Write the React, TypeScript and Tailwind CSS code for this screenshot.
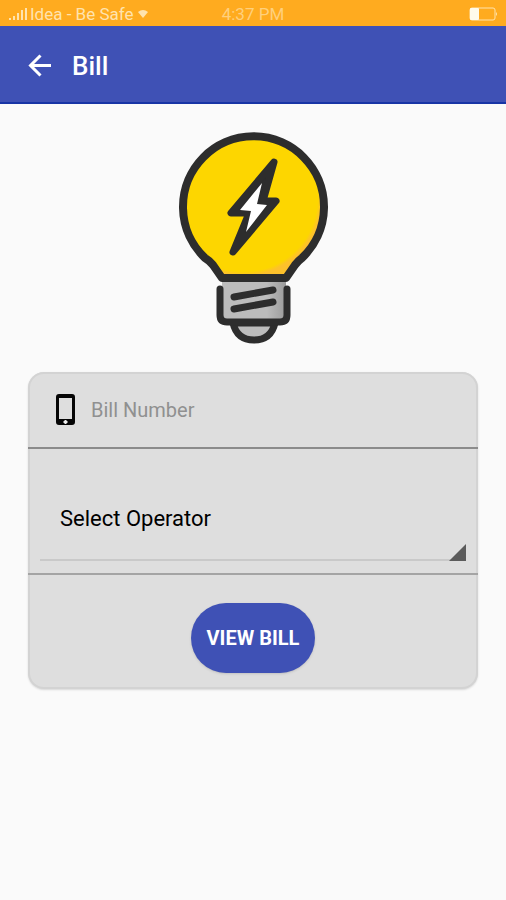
import { useState } from 'react';

function StatusBar() {
  return (
    <div className="grid h-[26px] grid-cols-3 items-center bg-[#ffab1f] px-2 pt-[2px] text-[17px] leading-6 text-[#ffe3ae]">
      <div className="flex items-center whitespace-nowrap">
        <svg width="22" height="14" viewBox="0 0 22 14" fill="#ffe3ae" aria-hidden="true">
          <rect x="1" y="11" width="2" height="2" />
          <rect x="5" y="9" width="2" height="4" />
          <rect x="9" y="6" width="2" height="7" />
          <rect x="13" y="3" width="2" height="10" />
          <rect x="17" y="1" width="2" height="12" />
        </svg>
        <span>Idea - Be Safe</span>
        <svg className="ml-1" width="10" height="8" viewBox="0 0 10 8" fill="#ffe3ae" aria-hidden="true">
          <path d="M0 2Q5-2 10 2L5 8Z" />
        </svg>
      </div>
      <span className="text-center text-[#ffd07c]">4:37 PM</span>
      <svg className="justify-self-end" width="29" height="14" viewBox="0 0 29 14" aria-hidden="true">
        <rect x="1" y="1" width="25" height="12" rx="2" fill="none" stroke="#ffe3ae" />
        <rect x="1" y="1" width="9" height="12" rx="1" fill="#fffbea" />
        <path d="M27 5v4q2-2 0-4z" fill="#ffe3ae" />
      </svg>
    </div>
  );
}

function Header() {
  return (
    <header className="flex h-[78px] items-center gap-4 border-b-2 border-[#1835a5] bg-[#3f51b5] px-6 pt-1 text-white">
      <button type="button" aria-label="Back" className="p-1">
        <svg width="24" height="24" viewBox="0 0 24 24" fill="none" stroke="currentColor" strokeWidth="3">
          <path d="M23 11.5H3M12.5 1.5L2.5 11.5l10 10" />
        </svg>
      </button>
      <h1 className="text-[26px] font-medium">Bill</h1>
    </header>
  );
}

function BulbLogo() {
  return (
    <svg width="168" height="220" viewBox="169 128 168 220" strokeLinecap="round" strokeLinejoin="round" aria-hidden="true">
      <defs>
        <radialGradient id="glass" gradientUnits="userSpaceOnUse" cx="244" cy="198" r="80">
          <stop offset="0.92" stopColor="#fdd600" />
          <stop offset="0.97" stopColor="#fdc12c" />
        </radialGradient>
        <linearGradient id="metal" x1="0" y1="0" x2="1" y2="0">
          <stop offset="0.7" stopColor="#bcbcbc" />
          <stop offset="1" stopColor="#9b9b9b" />
        </linearGradient>
      </defs>
      <path d="M222 281h64v41h-64z" fill="url(#metal)" />
      <path
        d="M222 278L213 265Q210 261 205 258A70.5 70.5 0 1 1 302 258Q298 261 295 265L286 278Z"
        fill="url(#glass)"
        stroke="#2d2d2d"
        strokeWidth="8"
      />
      <path d="M274 162L231 213L249 213L233 252L276 201L263 201Z" fill="#2d2d2d" stroke="#2d2d2d" strokeWidth="7" />
      <path d="M262 183L240 210L251 211L246 232L267 205L257 204Z" fill="#fff" />
      <path d="M233 323Q237 340 254 340Q271 340 275 323Z" fill="#bcbcbc" stroke="#2d2d2d" strokeWidth="7" />
      <path d="M220 289V315Q220 322 227 322H280Q287 322 287 315V289" fill="none" stroke="#2d2d2d" strokeWidth="7" />
      <path d="M234 297L273 290M234 309L273 302" stroke="#2d2d2d" strokeWidth="7" />
    </svg>
  );
}

function BillForm() {
  const [billNumber, setBillNumber] = useState('');

  return (
    <form
      className="w-full overflow-hidden rounded-2xl bg-[#dedede] shadow-[inset_0_0_0_2px_#d3d3d3,0_1px_2px_#d8d8d8]"
      onSubmit={(e) => e.preventDefault()}
    >
      <div className="flex h-[77px] items-center gap-4 border-b-2 border-[#8b8b8b] px-7">
        <label htmlFor="bill-number" aria-label="Bill Number">
          <svg width="19" height="31" viewBox="0 0 19 31" aria-hidden="true">
            <path
              d="M3 0H16Q19 0 19 3V28Q19 31 16 31H3Q0 31 0 28V3Q0 0 3 0ZM3 4V25H16V4Z"
              fill="#050505"
              fillRule="evenodd"
            />
            <path d="M9.5 26v4M7.5 28h4" stroke="#eee" strokeWidth="2" />
          </svg>
        </label>
        <input
          id="bill-number"
          type="text"
          placeholder="Bill Number"
          value={billNumber}
          onChange={(e) => setBillNumber(e.target.value)}
          className="min-w-0 flex-1 bg-transparent text-xl text-black outline-none placeholder:text-[#909090]"
        />
      </div>

      <div className="border-b-2 border-[#a4a4a4] px-3 pt-7 pb-3">
        <div className="relative">
          <select
            aria-label="Operator"
            className="h-[84px] w-full appearance-none border-b-2 border-[#c9c9c9] bg-transparent px-5 text-[22px] text-black outline-none"
          >
            <option>Select Operator</option>
          </select>
          <svg
            className="pointer-events-none absolute right-0 bottom-0"
            width="17"
            height="17"
            viewBox="0 0 17 17"
            fill="#5b5b5b"
            aria-hidden="true"
          >
            <path d="M17 0V17H0Z" />
          </svg>
        </div>
      </div>

      <div className="flex justify-center pt-7 pb-4">
        <button
          type="submit"
          className="h-[70px] rounded-full bg-[#3f51b5] px-4 text-xl font-bold text-white shadow-sm"
        >
          VIEW BILL
        </button>
      </div>
    </form>
  );
}

export default function App() {
  return (
    <div className="min-h-screen bg-[#fafafa] font-['Roboto',sans-serif]">
      <StatusBar />
      <Header />
      <main className="flex flex-col items-center gap-6 px-7 pt-6">
        <BulbLogo />
        <BillForm />
      </main>
    </div>
  );
}
